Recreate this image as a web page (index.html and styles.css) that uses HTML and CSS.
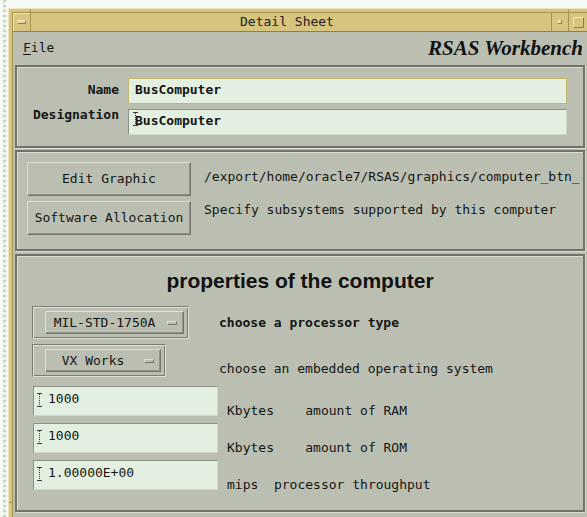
FILE: index.html
```html
<!DOCTYPE html>
<html lang="en">
<head>
<meta charset="utf-8">
<title>Detail Sheet</title>
<link rel="stylesheet" href="styles.css">
</head>
<body>
<div class="window">
  <div class="window-body">
    <div class="titlebar">
      <div class="wm-menu"><span class="wm-minus"></span></div>
      <div class="wm-title">Detail Sheet</div>
      <div class="wm-iconify"><span class="wm-dot"></span></div>
      <div class="wm-maximize"><span class="wm-square"></span></div>
    </div>

    <div class="client">
      <div class="menubar">
        <span class="menu-item"><span class="mnemonic">F</span>ile</span>
        <span class="app-name">RSAS Workbench</span>
      </div>

      <section class="frame ident">
        <span class="ident-label label-name">Name</span>
        <div class="text-field ident-field has-focus">BusComputer</div>
        <span class="ident-label label-designation">Designation</span>
        <div class="text-field ident-field">
          <svg class="ibeam ibeam-ident" width="5" height="14" viewBox="0 0 5 14"><path d="M0 0.5H5M0 13.5H5" stroke="#3c3c3c"/><path d="M2.5 1V13" stroke="#3c3c3c" stroke-dasharray="1 1"/></svg>BusComputer
        </div>
      </section>

      <section class="frame graphics">
        <button class="push-button" type="button">Edit Graphic</button>
        <span class="graphics-note note-path">/export/home/oracle7/RSAS/graphics/computer_btn_</span>
        <button class="push-button" type="button">Software Allocation</button>
        <span class="graphics-note note-alloc">Specify subsystems supported by this computer</span>
      </section>

      <section class="frame properties">
        <h2 class="properties-title">properties of the computer</h2>

        <div class="prop-row option-row">
          <div class="option-cell">
            <div class="option-menu">
              <div class="option-button option-wide"><span class="option-text">MIL-STD-1750A</span><span class="option-indicator"></span></div>
            </div>
          </div>
          <span class="prop-note note-top strong">choose a processor type</span>
        </div>

        <div class="prop-row option-row">
          <div class="option-cell">
            <div class="option-menu">
              <div class="option-button option-narrow"><span class="option-text">VX Works</span><span class="option-indicator"></span></div>
            </div>
          </div>
          <span class="prop-note note-low">choose an embedded operating system</span>
        </div>

        <div class="prop-row field-row">
          <div class="text-field number-field">
            <svg class="ibeam ibeam-number" width="5" height="14" viewBox="0 0 5 14"><path d="M0 0.5H5M0 13.5H5" stroke="#3c3c3c"/><path d="M2.5 1V13" stroke="#3c3c3c" stroke-dasharray="1 1"/></svg>1000
          </div>
          <span class="field-note">Kbytes    amount of RAM</span>
        </div>

        <div class="prop-row field-row">
          <div class="text-field number-field">
            <svg class="ibeam ibeam-number" width="5" height="14" viewBox="0 0 5 14"><path d="M0 0.5H5M0 13.5H5" stroke="#3c3c3c"/><path d="M2.5 1V13" stroke="#3c3c3c" stroke-dasharray="1 1"/></svg>1000
          </div>
          <span class="field-note">Kbytes    amount of ROM</span>
        </div>

        <div class="prop-row field-row">
          <div class="text-field number-field">
            <svg class="ibeam ibeam-number" width="5" height="14" viewBox="0 0 5 14"><path d="M0 0.5H5M0 13.5H5" stroke="#3c3c3c"/><path d="M2.5 1V13" stroke="#3c3c3c" stroke-dasharray="1 1"/></svg>1.00000E+00
          </div>
          <span class="field-note">mips  processor throughput</span>
        </div>
      </section>
    </div>
  </div>
</div>
</body>
</html>
```

FILE: styles.css
```css
* {
  box-sizing: border-box;
}

html,
body {
  margin: 0;
  padding: 0;
}

body {
  width: 587px;
  height: 517px;
  overflow: hidden;
  background:
    repeating-linear-gradient(to bottom, #c4d3c0 0 2px, #eef3ec 2px 5px) 3px 0 / 3px 100% no-repeat,
    #f6f8f4;
  font-family: "DejaVu Sans Mono", "Liberation Mono", monospace;
  font-size: 13px;
  line-height: 16px;
  color: #151515;
}

/* ---- window manager frame ---- */
.window {
  margin: 8px 0 0 8px;
  width: 600px;
  min-height: 520px;
  padding: 3px 0 0 3px;
  border-top: 1px solid #efe6bf;
  border-left: 1px solid #efe6bf;
  background:
    linear-gradient(#a59553, #a59553) 21px 0 / 1px 4px no-repeat,
    linear-gradient(#a59553, #a59553) 559px 0 / 1px 4px no-repeat,
    linear-gradient(#a59553, #a59553) 0 493px / 3px 1px no-repeat,
    #d6c47f;
}

.window-body {
  width: 575px;
  border-top: 1px solid #a59553;
  border-left: 1px solid #a59553;
}

.titlebar {
  display: flex;
  height: 19px;
  border-bottom: 1px solid #8e8049;
  background: #d6c47f;
}

.wm-menu {
  width: 18px;
  border-right: 1px solid #a59553;
  display: flex;
  align-items: center;
  justify-content: center;
  box-shadow: inset 1px 1px 0 #ece1b2;
}

.wm-minus {
  width: 9px;
  height: 4px;
  background: #e3d59c;
  border-top: 1px solid #f3ebc8;
  border-left: 1px solid #f3ebc8;
  border-bottom: 1px solid #8e8049;
  border-right: 1px solid #8e8049;
}

.wm-title {
  flex: 1;
  text-align: center;
  line-height: 18px;
  padding-right: 8px;
  color: #1d1d1d;
}

.wm-iconify {
  width: 18px;
  border-left: 1px solid #a59553;
  border-right: 1px solid #a59553;
  display: flex;
  align-items: center;
  justify-content: center;
}

.wm-dot {
  width: 4px;
  height: 4px;
  background: #eee4b8;
  border-right: 1px solid #8e8049;
  border-bottom: 1px solid #8e8049;
}

.wm-maximize {
  width: 18px;
  display: flex;
  align-items: center;
  padding-left: 4px;
}

.wm-square {
  width: 11px;
  height: 11px;
  border: 1px solid;
  border-color: #f3ebc8 #8e8049 #8e8049 #f3ebc8;
}

/* ---- application client area ---- */
.client {
  width: 574px;
  height: 486px;
  padding: 0 2px;
  background: #babfb1;
}

.menubar {
  height: 33px;
  display: flex;
  align-items: center;
  justify-content: space-between;
  padding: 0 2px 1px 8px;
}

.mnemonic {
  text-decoration: underline;
  text-underline-offset: 2px;
}

.app-name {
  font-family: "Liberation Serif", "Times New Roman", serif;
  font-weight: bold;
  font-style: italic;
  font-size: 21px;
  line-height: 24px;
  color: #111;
}

.frame {
  border: 2px solid #6f736b;
  box-shadow: inset 1px 1px 0 #d9ded2, 1px 1px 0 #d9ded2;
}

.frame + .frame {
  margin-top: 2px;
}

.graphics + .properties {
  margin-top: 3px;
}

/* ---- identification ---- */
.ident {
  display: grid;
  grid-template-columns: 102px 439px;
  column-gap: 9px;
  row-gap: 5px;
  padding: 11px 0;
}

.ident-label {
  font-weight: bold;
  text-align: right;
  align-self: start;
}

.label-name {
  margin-top: 4px;
}

.label-designation {
  margin-top: -2px;
}

.text-field {
  position: relative;
  background: #e3f0e1;
  border: 1px solid;
  border-color: #8d9288 #d3d7cb #d3d7cb #8d9288;
  white-space: nowrap;
}

.ident-field {
  height: 26px;
  padding: 3px 0 0 6px;
  font-weight: bold;
}

.has-focus {
  border-color: #c7b46f;
}

.ibeam {
  position: absolute;
  display: block;
}

.ibeam-ident {
  left: 4px;
  top: 2px;
}

.ibeam-number {
  left: 3px;
  top: 6px;
}

/* ---- graphics / allocation ---- */
.graphics {
  display: grid;
  grid-template-columns: 164px 379px;
  column-gap: 13px;
  row-gap: 5px;
  padding: 10px 0 14px 10px;
}

.push-button {
  height: 34px;
  padding: 0;
  font: inherit;
  color: inherit;
  background: #babfb1;
  border: 1px solid;
  border-color: #dde1d6 #72766d #72766d #dde1d6;
  box-shadow: inset -1px -1px 0 #8f938a;
}

.graphics-note {
  white-space: nowrap;
  overflow: hidden;
  align-self: start;
}

.note-path {
  margin-top: 7px;
}

.note-alloc {
  margin-top: 1px;
}

/* ---- computer properties ---- */
.properties {
  padding: 13px 0 20px 0;
}

.properties-title {
  margin: 0 0 13px 0;
  font-family: "Liberation Sans", Arial, sans-serif;
  font-weight: bold;
  font-size: 21px;
  line-height: 24px;
  text-align: center;
  color: #111;
}

.prop-row {
  display: flex;
  align-items: flex-start;
  padding-left: 15px;
}

.option-row {
  height: 35px;
}

.option-row + .option-row {
  margin-top: 3px;
}

.option-cell {
  width: 187px;
}

.option-menu {
  display: inline-flex;
  padding: 4px 4px 4px 12px;
  border: 1px solid;
  border-color: #7a7e75 #dde1d6 #dde1d6 #7a7e75;
  box-shadow: inset 1px 1px 0 #dde1d6, inset -1px -1px 0 #7a7e75;
}

.option-button {
  display: flex;
  align-items: center;
  height: 23px;
  padding-right: 6px;
  border: 1px solid;
  border-color: #dde1d6 #72766d #72766d #dde1d6;
  box-shadow: inset -1px -1px 0 #90948b;
}

.option-wide {
  width: 139px;
}

.option-narrow {
  width: 116px;
}

.option-text {
  flex: 1;
  text-align: center;
}

.option-indicator {
  width: 10px;
  height: 4px;
  margin-left: 4px;
  border: 1px solid;
  border-color: #dde1d6 #72766d #72766d #dde1d6;
}

.prop-note {
  white-space: nowrap;
}

.note-top {
  padding-top: 9px;
}

.note-low {
  padding-top: 17px;
}

.strong {
  font-weight: bold;
}

.field-row {
  height: 30px;
  margin-top: 7px;
}

.number-field {
  width: 185px;
  height: 30px;
  margin-left: 1px;
  padding: 4px 0 0 14px;
}

.field-note {
  margin-left: 9px;
  padding-top: 17px;
  white-space: pre;
}
```
